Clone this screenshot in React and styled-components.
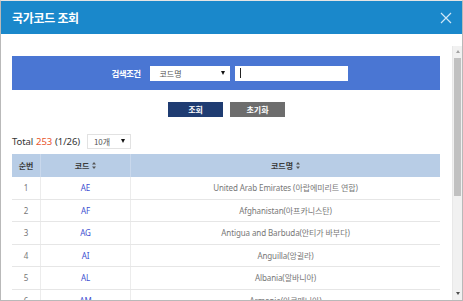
import React from 'react';
import styled, { createGlobalStyle } from 'styled-components';

const GlobalStyle = createGlobalStyle`
  html, body { margin: 0; padding: 0; background: #fff; }
  body { font-family: "Noto Sans", "Noto Sans CJK KR", sans-serif; }
  * { box-sizing: border-box; }
`;

const Frame = styled.div`
  width: 463px;
  height: 301px;
  display: flex;
  flex-direction: column;
  border: 1px solid #b9b9b9;
  border-top-color: #e4e4e4;
  overflow: hidden;
  background: #fff;
`;

const Header = styled.div`
  height: 33px;
  flex: none;
  display: flex;
  align-items: center;
  justify-content: space-between;
  padding: 0 10px 0 11px;
  background: #1a88cb;
`;

const Title = styled.h1`
  margin: 0;
  color: #fff;
  font-size: 12px;
  font-weight: 700;
  letter-spacing: -0.3px;
  font-family: "Noto Sans CJK KR", sans-serif;
`;

const Body = styled.div`
  flex: 1;
  display: flex;
  padding-top: 12px;
  min-height: 0;
`;

const Content = styled.div`
  flex: 1;
  padding: 10px 12px 0 11px;
  overflow: hidden;
`;

const SearchPanel = styled.div`
  height: 34px;
  background: #4a76d3;
  display: flex;
  align-items: center;
  justify-content: center;
  padding-left: 7px;
`;

const Label = styled.span`
  width: 28px;
  color: #fff;
  font-size: 8.5px;
  font-weight: 700;
  letter-spacing: -0.6px;
  white-space: nowrap;
  font-family: "Noto Sans CJK KR", sans-serif;
  margin-right: 10px;
`;

const Select = styled.div`
  width: ${p => p.$w}px;
  height: 15px;
  background: #fff;
  display: flex;
  align-items: center;
  justify-content: space-between;
  padding: 0 5px 0 10px;
  font-size: 8px;
  color: #555;
  font-family: "Noto Sans CJK KR", sans-serif;
  border: ${p => (p.$bordered ? '1px solid #e2e2e2' : 'none')};
`;

const Caret = styled.span`
  width: 0;
  height: 0;
  border-left: 2.5px solid transparent;
  border-right: 2.5px solid transparent;
  border-top: 4px solid #111;
`;

const Input = styled.div`
  width: 113px;
  height: 15px;
  margin-left: 5px;
  background: #fff;
  display: flex;
  align-items: center;
  padding-left: 5px;
  &::before {
    content: '';
    width: 1px;
    height: 10px;
    background: #222;
  }
`;

const ButtonRow = styled.div`
  display: flex;
  justify-content: center;
  gap: 7px;
  margin-top: 12px;
  padding-left: 1px;
`;

const Button = styled.button`
  width: 55px;
  height: 15px;
  border: none;
  padding: 0;
  color: #fff;
  font-size: 8px;
  font-weight: 700;
  font-family: "Noto Sans CJK KR", sans-serif;
  background: ${p => (p.$primary ? '#1f3c72' : '#6d6d6d')};
`;

const TotalBar = styled.div`
  display: flex;
  align-items: center;
  margin-top: 16px;
  height: 16px;
  font-size: 9.5px;
  letter-spacing: -0.1px;
  color: #333;
`;

const Count = styled.span`
  color: #e8542c;
  margin: 0 3px;
`;

const PageSize = styled(Select)`
  margin-left: 7px;
  padding-left: 6px;
`;

const Table = styled.div`
  margin-top: 5px;
`;

const Row = styled.div`
  display: grid;
  grid-template-columns: 28px 90px 1fr;
  height: ${p => (p.$head ? 23 : 22.5)}px;
  background: ${p => (p.$head ? '#b8cde6' : '#fff')};
  border-bottom: ${p => (p.$head ? 'none' : '1px solid #e6e6e6')};
`;

const Cell = styled.div`
  display: flex;
  align-items: center;
  justify-content: center;
  gap: 3px;
  white-space: nowrap;
  overflow: hidden;
  font-family: "Noto Sans", "Noto Sans CJK KR", sans-serif;
  font-size: 8px;
  font-weight: ${p => (p.$head ? 700 : 400)};
  letter-spacing: ${p => (p.$head ? 0 : -0.1)}px;
  color: ${p => (p.$head ? '#3b3b3b' : p.$code ? '#3b4fd1' : '#777')};
  border-left: ${p => (p.$first ? 'none' : `1px solid ${p.$head ? '#c9d8ec' : '#ececec'}`)};
`;

const Scrollbar = styled.div`
  width: 10px;
  flex: none;
  background: #f1f1f1;
  border-left: 1px solid #e8e8e8;
  display: flex;
  flex-direction: column;
  align-items: center;
  padding: 2px 1px 3px;
`;

const Arrow = styled.span`
  width: 0;
  height: 0;
  border-left: 2px solid transparent;
  border-right: 2px solid transparent;
  ${p => (p.$down ? 'border-top: 3px solid #505050;' : 'border-bottom: 3px solid #a3a3a3;')}
  margin: 2px 0;
`;

const Thumb = styled.div`
  width: 7px;
  height: 138px;
  margin-top: 3px;
  background: #c1c1c1;
`;

const Track = styled.div`
  flex: 1;
`;

function SortIcon() {
  return (
    <svg width="4" height="7" viewBox="0 0 4 7">
      <path d="M2 0 L4 2.5 L0 2.5 Z M0 4.5 L4 4.5 L2 7 Z" fill="#555" />
    </svg>
  );
}

function CloseIcon() {
  return (
    <svg width="12" height="12" viewBox="0 0 12 12">
      <path d="M1 1 L11 11 M11 1 L1 11" stroke="#cfe6f7" strokeWidth="1.2" />
    </svg>
  );
}

const rows = [
  ['1', 'AE', 'United Arab Emirates (아랍에미리트 연합)'],
  ['2', 'AF', 'Afghanistan(아프카니스탄)'],
  ['3', 'AG', 'Antigua and Barbuda(안티가 바부다)'],
  ['4', 'AI', 'Anguilla(앙귈라)'],
  ['5', 'AL', 'Albania(알바니아)'],
  ['6', 'AM', 'Armenia(아르메니아)'],
];

export default function App() {
  return (
    <>
      <GlobalStyle />
      <Frame>
        <Header>
          <Title>국가코드 조회</Title>
          <CloseIcon />
        </Header>
        <Body>
          <Content>
            <SearchPanel>
              <Label>검색조건</Label>
              <Select $w={80}>
                <span>코드명</span>
                <Caret />
              </Select>
              <Input />
            </SearchPanel>
            <ButtonRow>
              <Button $primary>조회</Button>
              <Button>초기화</Button>
            </ButtonRow>
            <TotalBar>
              Total<Count>253</Count>(1/26)
              <PageSize $w={44} $bordered>
                <span>10개</span>
                <Caret />
              </PageSize>
            </TotalBar>
            <Table>
              <Row $head>
                <Cell $head $first>순번</Cell>
                <Cell $head>코드 <SortIcon /></Cell>
                <Cell $head>코드명 <SortIcon /></Cell>
              </Row>
              {rows.map(([no, code, name]) => (
                <Row key={code}>
                  <Cell $first>{no}</Cell>
                  <Cell $code>{code}</Cell>
                  <Cell>{name}</Cell>
                </Row>
              ))}
            </Table>
          </Content>
          <Scrollbar>
            <Arrow />
            <Thumb />
            <Track />
            <Arrow $down />
          </Scrollbar>
        </Body>
      </Frame>
    </>
  );
}
